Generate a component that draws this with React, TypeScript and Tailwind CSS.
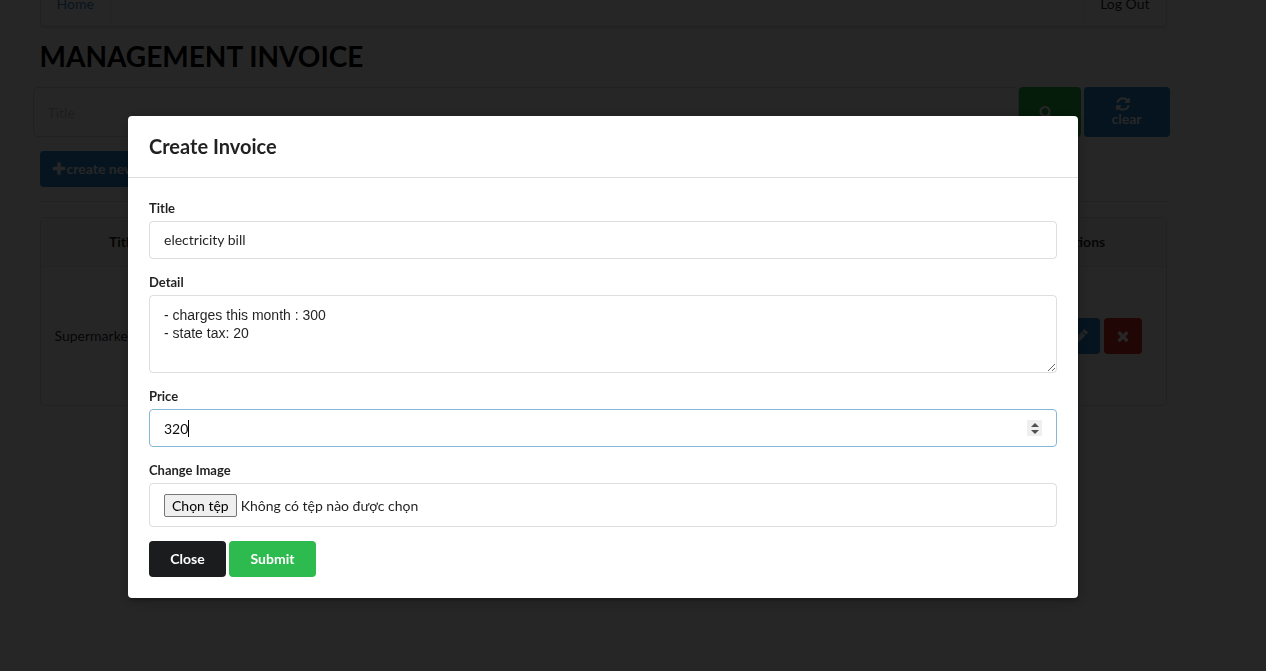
import React, { useState } from "react";

const paths = {
  plus: "M1600 736v192q0 40-28 68t-68 28h-416v416q0 40-28 68t-68 28h-192q-40 0-68-28t-28-68v-416h-416q-40 0-68-28t-28-68v-192q0-40 28-68t68-28h416v-416q0-40 28-68t68-28h192q40 0 68 28t28 68v416h416q40 0 68 28t28 68z",
  times:
    "M1490 1322q0 40-28 68l-136 136q-28 28-68 28t-68-28l-294-294-294 294q-28 28-68 28t-68-28l-136-136q-28-28-28-68t28-68l294-294-294-294q-28-28-28-68t28-68l136-136q28-28 68-28t68 28l294 294 294-294q28-28 68-28t68 28l136 136q28 28 28 68t-28 68l-294 294 294 294q28 28 28 68z",
  search:
    "M1216 832q0-185-131.5-316.5t-316.5-131.5-316.5 131.5-131.5 316.5 131.5 316.5 316.5 131.5 316.5-131.5 131.5-316.5zm512 832q0 52-38 90t-90 38q-54 0-90-38l-343-342q-179 124-399 124-143 0-273.5-55.5t-225-150-150-225-55.5-273.5 55.5-273.5 150-225 225-150 273.5-55.5 273.5 55.5 225 150 150 225 55.5 273.5q0 220-124 399l343 343q37 37 37 90z",
  refresh:
    "M1639 1056q0 5-1 7-64 268-268 434.5t-478 166.5q-146 0-282.5-55t-243.5-157l-129 129q-19 19-45 19t-45-19-19-45v-448q0-26 19-45t45-19h448q26 0 45 19t19 45-19 45l-137 137q71 66 161 102t187 36q134 0 250-65t186-179q11-17 53-117 8-23 30-23h192q13 0 22.5 9.5t9.5 22.5zm25-800v448q0 26-19 45t-45 19h-448q-26 0-45-19t-19-45 19-45l138-138q-148-137-349-137-134 0-250 65t-186 179q-11 17-53 117-8 23-30 23h-199q-13 0-22.5-9.5t-9.5-22.5v-7q65-268 270-434.5t480-166.5q146 0 284 55.5t245 156.5l130-129q19-19 45-19t45 19 19 45z",
  pencil:
    "M491 1536l91-91-235-235-91 91v107h128v128h107zm523-928q0-22-22-22-10 0-17 7l-542 542q-7 7-7 17 0 22 22 22 10 0 17-7l542-542q7-7 7-17zm-54-192l416 416-832 832h-416v-416zm683 96q0 53-37 90l-166 166-416-416 166-165q36-38 90-38 53 0 91 38l235 234q37 39 37 91z",
};

function Icon({ name, className = "size-4" }: { name: keyof typeof paths; className?: string }) {
  return (
    <svg viewBox="0 0 1792 1792" fill="currentColor" aria-hidden="true" className={className}>
      <path d={paths[name]} />
    </svg>
  );
}

function Field({ id, label, children }: { id: string; label: string; children: React.ReactNode }) {
  return (
    <div className="mb-3.5">
      <label htmlFor={id} className="mb-1 block text-[13px] leading-[18px] font-bold">
        {label}
      </label>
      {children}
    </div>
  );
}

function InvoicePage() {
  return (
    <main className="mx-auto -mt-4 max-w-[1127px]">
      <nav className="flex h-[43px] items-stretch justify-between rounded border border-[#22242626] shadow-[0_1px_2px_#22242626]">
        <a href="#home" className="flex items-center border-r border-[#2224261a] px-4 pb-1 text-[#4183c4]">
          Home
        </a>
        <a href="#logout" className="flex items-center border-l border-[#2224261a] px-4 pb-1">
          Log Out
        </a>
      </nav>
      <h1 className="mt-[11px] text-[28px] leading-9 font-bold text-black">MANAGEMENT INVOICE</h1>
      <form className="-mx-[7px] mt-[13px] mr-[-3px] flex h-[50px]">
        <input
          aria-label="Title"
          placeholder="Title"
          className="min-w-0 flex-1 rounded border border-[#22242626] px-3.5 pt-0.5 placeholder:text-[#bfbfbf]"
        />
        <button type="button" aria-label="Search" className="flex w-[62px] items-center rounded bg-[#21ba45] pl-5 text-white">
          <Icon name="search" className="size-3.5" />
        </button>
        <button
          type="button"
          className="ml-[3px] flex w-[86px] flex-col items-center justify-center rounded bg-[#2185d0] pb-0.5 leading-[14px] font-bold text-white"
        >
          <Icon name="refresh" className="mr-2 size-4" />
          clear
        </button>
      </form>
      <button type="button" className="mt-3.5 flex h-9 items-center rounded bg-[#2185d0] pr-5 pl-[11px] font-bold text-white">
        <Icon name="plus" />
        create new
      </button>
      <hr className="mt-3.5 border-[#22242626]" />
      <div className="mt-[15px] overflow-hidden rounded border border-[#22242626]">
        <table className="w-full table-fixed text-center">
          <thead>
            <tr className="h-12 border-b border-[#2224261a] bg-[#f9f9f9]">
              <th className="w-[165px]">Title</th>
              <th />
              <th className="w-[168px]">Actions</th>
            </tr>
          </thead>
          <tbody>
            <tr className="h-[139px]">
              <td className="px-3.5 text-left">Supermarket</td>
              <td />
              <td>
                <div className="flex justify-end gap-1 pr-6">
                  <button type="button" aria-label="Edit" className="flex h-9 w-[38px] items-center justify-center rounded bg-[#2185d0] text-white">
                    <Icon name="pencil" />
                  </button>
                  <button type="button" aria-label="Delete" className="flex h-9 w-[38px] items-center justify-center rounded bg-[#db2828] text-white">
                    <Icon name="times" />
                  </button>
                </div>
              </td>
            </tr>
          </tbody>
        </table>
      </div>
    </main>
  );
}

const box = "block w-full rounded border border-[#22242626] px-3.5 outline-none";

function CreateInvoice() {
  const [price, setPrice] = useState("320");
  const step = (by: number) => setPrice(String(Number(price) + by));
  return (
    <section
      role="dialog"
      aria-modal="true"
      aria-labelledby="dialog-title"
      className="w-full max-w-[950px] rounded bg-white shadow-[1px_3px_3px_0_rgba(0,0,0,0.2),1px_3px_15px_2px_rgba(0,0,0,0.2)]"
    >
      <h2 id="dialog-title" className="border-b border-[#22242626] px-[21px] py-4 text-xl leading-[29px] font-bold">
        Create Invoice
      </h2>
      <form className="p-[21px]">
        <Field id="title" label="Title">
          <input id="title" defaultValue="electricity bill" className={`${box} h-[38px] pb-0.5`} />
        </Field>
        <Field id="detail" label="Detail">
          <textarea
            id="detail"
            defaultValue={"- charges this month : 300\n- state tax: 20"}
            className={`${box} h-[78px] resize-y py-2.5 font-['Liberation_Sans',sans-serif] leading-[18px]`}
          />
        </Field>
        <Field id="price" label="Price">
          <div className="relative">
            <input
              id="price"
              type="number"
              value={price}
              onChange={(e) => setPrice(e.target.value)}
              className="block h-[38px] w-full rounded border border-[#85b7d9] px-3.5 text-[#000000f2] caret-transparent outline-none [&::-webkit-inner-spin-button]:appearance-none"
            />
            <span aria-hidden="true" className="absolute top-[11px] left-[39px] h-[17px] w-px bg-black" />
            <div className="absolute top-[11px] right-[15px] flex h-4 w-[15px] flex-col bg-[#efefef] text-[#505050]">
              <button type="button" aria-label="Increase price" onClick={() => step(1)} className="flex flex-1 items-end justify-center pb-px">
                <svg viewBox="0 0 8 4" fill="currentColor" className="h-1 w-2">
                  <path d="M0 4L4 0L8 4z" />
                </svg>
              </button>
              <button type="button" aria-label="Decrease price" onClick={() => step(-1)} className="flex flex-1 items-start justify-center pt-0.5">
                <svg viewBox="0 0 8 4" fill="currentColor" className="h-1 w-2">
                  <path d="M0 0L4 4L8 0z" />
                </svg>
              </button>
            </div>
          </div>
        </Field>
        <Field id="image" label="Change Image">
          <input id="image" type="file" className="peer sr-only" />
          <label htmlFor="image" className={`${box} flex h-11 items-center gap-1`}>
            <span className="rounded-xs border border-[#767676] bg-[#efefef] px-[7px] leading-[21px] text-black">Chọn tệp</span>
            <span className="pt-0.5">Không có tệp nào được chọn</span>
          </label>
        </Field>
        <div className="flex gap-[3px]">
          <button type="button" className="h-9 w-[77px] rounded bg-[#1b1c1d] font-bold text-white">
            Close
          </button>
          <button type="button" className="h-9 w-[87px] rounded bg-[#2dba4e] font-bold text-white">
            Submit
          </button>
        </div>
      </form>
    </section>
  );
}

export default function App() {
  return (
    <div className="h-screen overflow-hidden bg-white font-[Lato,'Noto_Sans',sans-serif] text-sm text-[#000000de]">
      <div className="pr-[60px]">
        <InvoicePage />
      </div>
      <div className="fixed inset-0 flex items-start justify-center overflow-auto bg-[#000000d9] pt-[116px] pr-[60px]">
        <CreateInvoice />
      </div>
    </div>
  );
}
